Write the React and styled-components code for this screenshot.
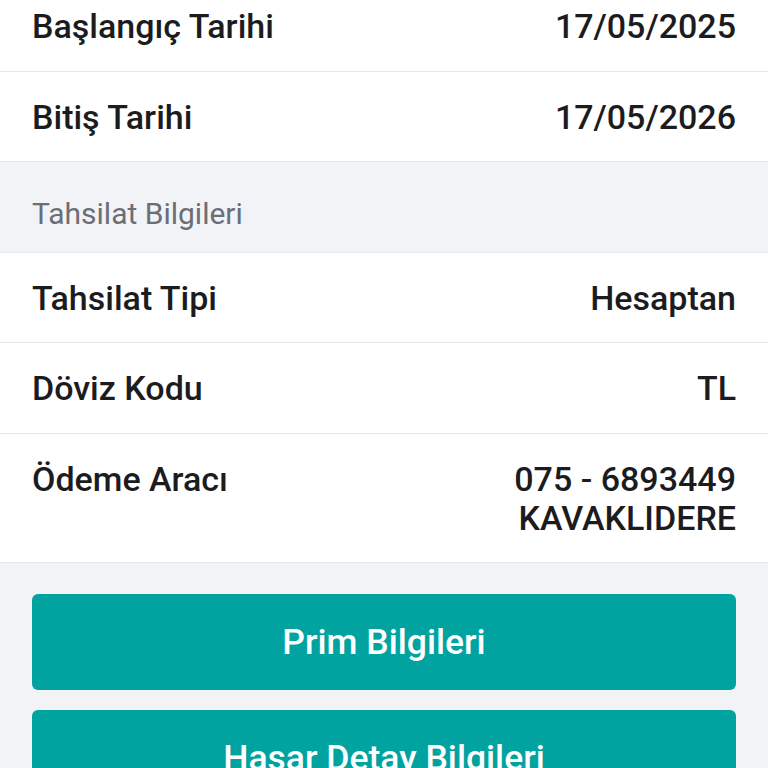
import React from "react";
import styled, { createGlobalStyle } from "styled-components";

const GlobalStyle = createGlobalStyle`
  html, body {
    margin: 0;
    padding: 0;
    background: #f2f3f7;
    font-family: Roboto, "Noto Sans", Arial, sans-serif;
    overflow: hidden;
  }
`;

const Page = styled.div`
  margin-top: -19px;
  background: #f2f3f7;
  min-height: 800px;
`;

const Row = styled.div`
  display: flex;
  justify-content: space-between;
  align-items: flex-start;
  padding: 26px 32px 24.5px;
  background: #ffffff;
  border-bottom: 1px solid #e6e7eb;
  font-size: 34px;
  font-weight: 500;
  line-height: 39px;
  color: #1c1c1e;
`;

const Label = styled.span``;

const Value = styled.span`
  text-align: right;
  white-space: pre-line;
`;

const SectionHeader = styled.div`
  padding: 32px 32px 18.5px;
  background: #f2f3f7;
  border-bottom: 1px solid #e6e7eb;
  font-size: 30px;
  font-weight: 400;
  line-height: 39px;
  color: #6b6e75;
`;

const Actions = styled.div`
  display: flex;
  flex-direction: column;
  gap: 20px;
  padding: 31px 32px;
`;

const ActionButton = styled.button`
  height: 96px;
  border: none;
  border-radius: 6px;
  background: #00a3a0;
  color: #ffffff;
  font-family: Roboto, "Noto Sans", Arial, sans-serif;
  font-size: 35.5px;
  font-weight: 500;
  cursor: pointer;
`;

const policyRows = [
  { label: "Başlangıç Tarihi", value: "17/05/2025" },
  { label: "Bitiş Tarihi", value: "17/05/2026" },
];

const paymentRows = [
  { label: "Tahsilat Tipi", value: "Hesaptan" },
  { label: "Döviz Kodu", value: "TL" },
  { label: "Ödeme Aracı", value: "075 - 6893449\nKAVAKLIDERE" },
];

export default function App() {
  return (
    <>
      <GlobalStyle />
      <Page>
        {policyRows.map((r) => (
          <Row key={r.label}>
            <Label>{r.label}</Label>
            <Value>{r.value}</Value>
          </Row>
        ))}
        <SectionHeader>Tahsilat Bilgileri</SectionHeader>
        {paymentRows.map((r) => (
          <Row key={r.label}>
            <Label>{r.label}</Label>
            <Value>{r.value}</Value>
          </Row>
        ))}
        <Actions>
          <ActionButton>Prim Bilgileri</ActionButton>
          <ActionButton>Hasar Detay Bilgileri</ActionButton>
        </Actions>
      </Page>
    </>
  );
}
